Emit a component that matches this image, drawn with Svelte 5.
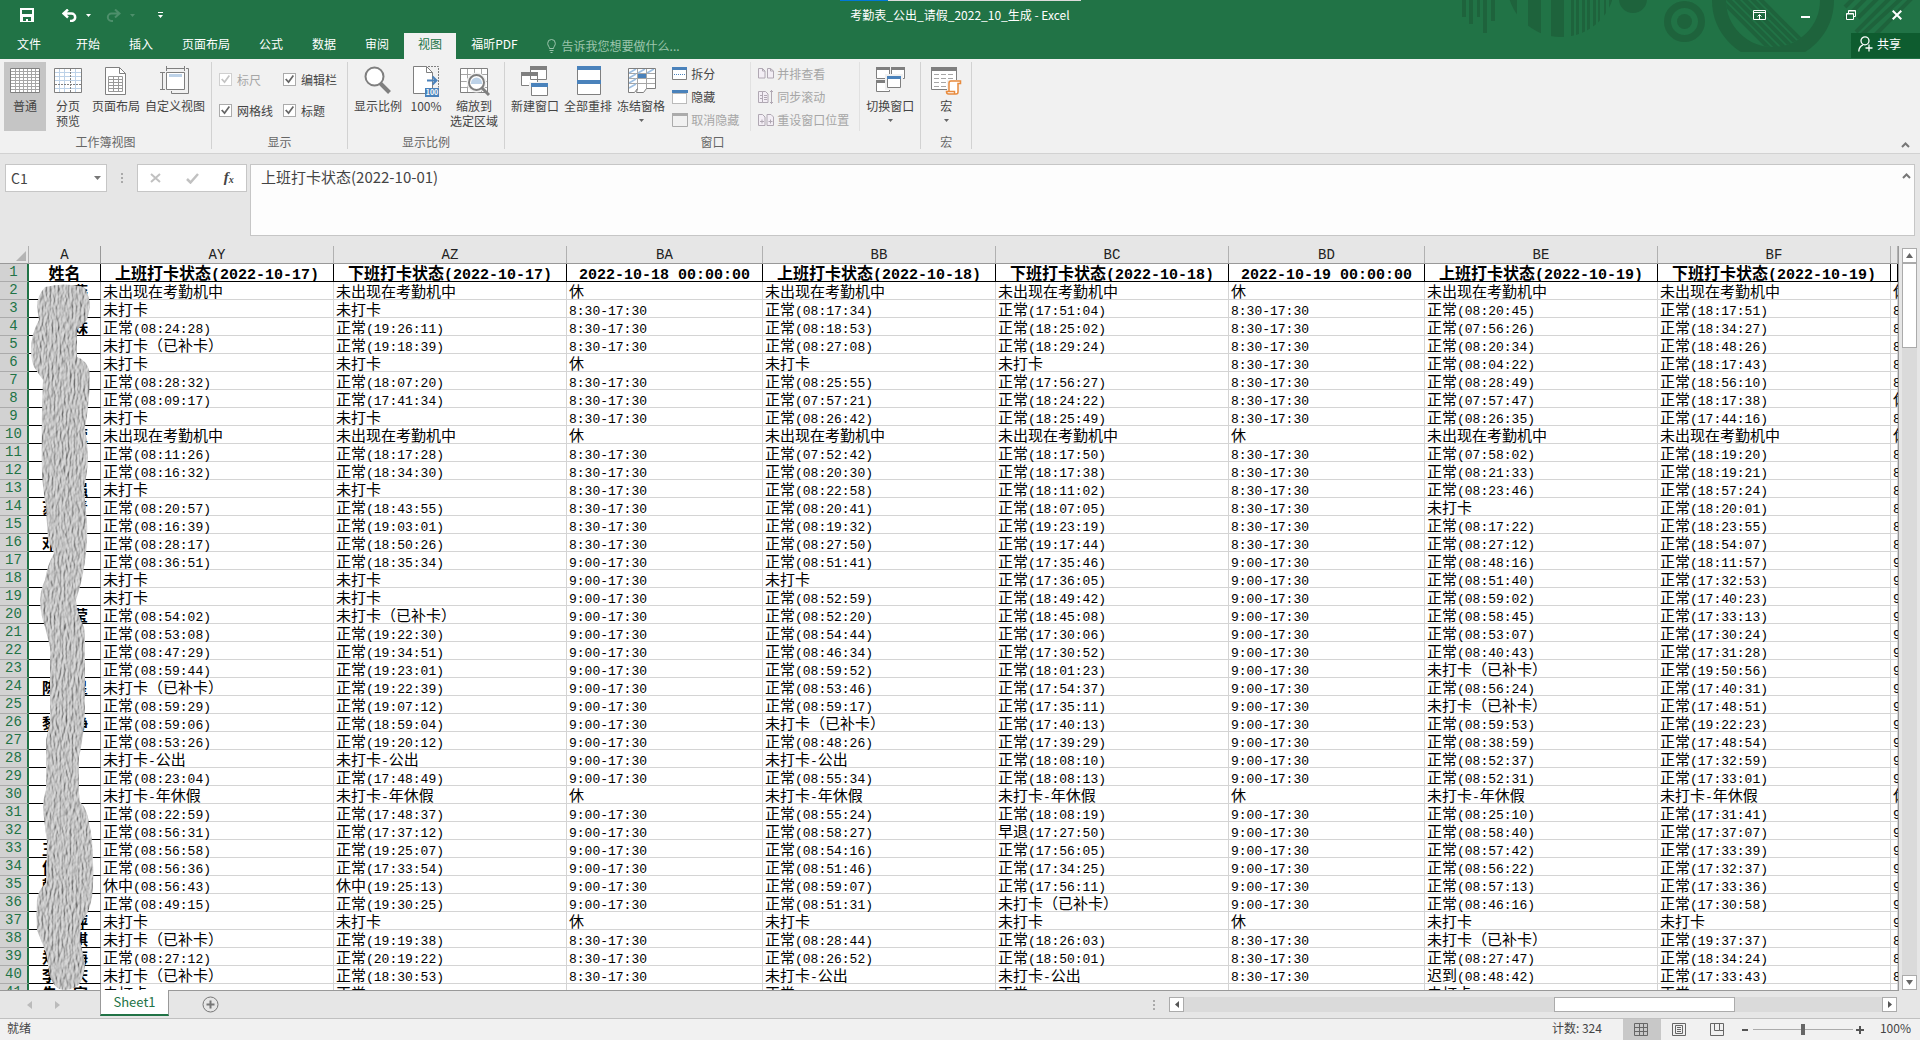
<script lang="ts">
	type Run = { text: string; cjk: boolean };

	const tabs = ['文件', '开始', '插入', '页面布局', '公式', '数据', '审阅', '视图', '福昕PDF'];
	let activeTab = $state('视图');

	let showRuler = $state(true);
	let showFormulaBar = $state(true);
	let showGridlines = $state(true);
	let showHeadings = $state(true);
	let zoom = $state(100);

	const columns = [
		{ id: 'A', width: 72, title: '姓名' },
		{ id: 'AY', width: 233, title: '上班打卡状态(2022-10-17)' },
		{ id: 'AZ', width: 233, title: '下班打卡状态(2022-10-17)' },
		{ id: 'BA', width: 196, title: '2022-10-18 00:00:00' },
		{ id: 'BB', width: 233, title: '上班打卡状态(2022-10-18)' },
		{ id: 'BC', width: 233, title: '下班打卡状态(2022-10-18)' },
		{ id: 'BD', width: 196, title: '2022-10-19 00:00:00' },
		{ id: 'BE', width: 233, title: '上班打卡状态(2022-10-19)' },
		{ id: 'BF', width: 233, title: '下班打卡状态(2022-10-19)' }
	];

	// short codes used in the rows below, a bare time means a normal punch
	const codes: Record<string, string> = {
		N: '未出现在考勤机中',
		W: '未打卡',
		B: '未打卡（已补卡）',
		G: '未打卡-公出',
		Y: '未打卡-年休假',
		X: '休',
		'8': '8:30-17:30',
		'9': '9:00-17:30'
	};

	const source = `
N N X N N X N N X
W W 8 08:17:34 17:51:04 8 08:20:45 18:17:51 8
08:24:28 19:26:11 8 08:18:53 18:25:02 8 07:56:26 18:34:27 8
B 19:18:39 8 08:27:08 18:29:24 8 08:20:34 18:48:26 8
W W X W W 8 08:04:22 18:17:43 8
08:28:32 18:07:20 8 08:25:55 17:56:27 8 08:28:49 18:56:10 8
08:09:17 17:41:34 8 07:57:21 18:24:22 8 07:57:47 18:17:38 X
W W 8 08:26:42 18:25:49 8 08:26:35 17:44:16 8
N N X N N X N N X
08:11:26 18:17:28 8 07:52:42 18:17:50 8 07:58:02 18:19:20 8
08:16:32 18:34:30 8 08:20:30 18:17:38 8 08:21:33 18:19:21 8
W W 8 08:22:58 18:11:02 8 08:23:46 18:57:24 8
08:20:57 18:43:55 8 08:20:41 18:07:05 8 W 18:20:01 8
08:16:39 19:03:01 8 08:19:32 19:23:19 8 08:17:22 18:23:55 8
08:28:17 18:50:26 8 08:27:50 19:17:44 8 08:27:12 18:54:07 8
08:36:51 18:35:34 9 08:51:41 17:35:46 9 08:48:16 18:11:57 9
W W 9 W 17:36:05 9 08:51:40 17:32:53 9
W W 9 08:52:59 18:49:42 9 08:59:02 17:40:23 9
08:54:02 B 9 08:52:20 18:45:08 9 08:58:45 17:33:13 9
08:53:08 19:22:30 9 08:54:44 17:30:06 9 08:53:07 17:30:24 9
08:47:29 19:34:51 9 08:46:34 17:30:52 9 08:40:43 17:31:28 9
08:59:44 19:23:01 9 08:59:52 18:01:23 9 B 19:50:56 9
B 19:22:39 9 08:53:46 17:54:37 9 08:56:24 17:40:31 9
08:59:29 19:07:12 9 08:59:17 17:35:11 9 B 17:48:51 9
08:59:06 18:59:04 9 B 17:40:13 9 08:59:53 19:22:23 9
08:53:26 19:20:12 9 08:48:26 17:39:29 9 08:38:59 17:48:54 9
G G 9 G 18:08:10 9 08:52:37 17:32:59 9
08:23:04 17:48:49 9 08:55:34 18:08:13 9 08:52:31 17:33:01 9
Y Y X Y Y X Y Y X
08:22:59 17:48:37 9 08:55:24 18:08:19 9 08:25:10 17:31:41 9
08:56:31 17:37:12 9 08:58:27 早退(17:27:50) 9 08:58:40 17:37:07 9
08:56:58 19:25:07 9 08:54:16 17:56:05 9 08:57:42 17:33:39 9
08:56:36 17:33:54 9 08:51:46 17:34:25 9 08:56:22 17:32:37 9
休中(08:56:43) 休中(19:25:13) 9 08:59:07 17:56:11 9 08:57:13 17:33:36 9
08:49:15 19:30:25 9 08:51:31 B 9 08:46:16 17:30:58 9
W W X W W X W W 9
B 19:19:38 8 08:28:44 18:26:03 8 B 19:37:37 8
08:27:12 20:19:22 8 08:26:52 18:50:01 8 08:27:47 18:34:24 8
B 18:30:53 8 G G 8 迟到(08:48:42) 17:33:43 8
W 20:40:44 8 08:17:44 18:37:40 8 W 18:40:44 8`;

	const rows = source
		.trim()
		.split('\n')
		.map((line) =>
			line.split(' ').map((c) => codes[c] ?? (/^\d/.test(c) ? `正常(${c})` : c))
		);

	// what still shows of the names on both sides of the smudge
	const names: Record<number, [string, string]> = {
		2: ['', '燕'],
		4: ['', '妹'],
		10: ['', '萱'],
		13: ['', '强'],
		14: ['苏', '青'],
		16: ['邓', ''],
		20: ['', '莹'],
		24: ['陈', '星'],
		26: ['黎', '静'],
		33: ['王', ''],
		34: ['何', ''],
		35: ['韩', ''],
		37: ['', '萍'],
		38: ['', '琪'],
		39: ['郑', '海'],
		40: ['李', '庆'],
		41: ['朱', '宾']
	};

	function runs(text: string): Run[] {
		return (text.match(/[\u2e80-\uffef]+|[^\u2e80-\uffef]+/g) ?? []).map((t) => ({
			text: t,
			cjk: /[\u2e80-\uffef]/.test(t)
		}));
	}
</script>

{#snippet cell(text: string)}
	{#each runs(text) as run}<span class={run.cjk ? 'zh' : 'en'}>{run.text}</span>{/each}
{/snippet}

{#snippet caret()}
	<svg class="caret" width="5" height="3" viewBox="0 0 5 3"><path d="M0 0h5L2.5 3z" fill="currentColor" /></svg>
{/snippet}

<div class="app">
	<header class="top">
		<svg class="art" width="480" height="58" viewBox="0 0 480 58" fill="#1e633c">
			<defs>
				<clipPath id="disc"><circle cx="121" cy="-17" r="54" /></clipPath>
				<clipPath id="bowl"><circle cx="333" cy="0" r="47" /></clipPath>
				<clipPath id="cut"><path d="M260 0h140v52H260z" /></clipPath>
			</defs>
			<path d="M22 0h4v17h-4zM29 0h4v24h-4zM37 0h3v17h-3zM43 0h4v33h-4zM51 0h4v21h-4z" />
			<path
				clip-path="url(#disc)"
				d="M66 0h11v40H66zM88 0h13v40H88zM111 0h13v40h-13zM131 0h3v40h-3zM136 0h3v40h-3zM142 0h3v40h-3zM147 0h3v40h-3zM153 0h3v40h-3zM158 0h2v40h-2zM164 0h2v40h-2zM169 0h3v40h-3z"
			/>
			<circle cx="193" cy="-1" r="14" />
			<circle cx="244.5" cy="21.5" r="17" fill="none" stroke="#1e633c" stroke-width="7" />
			<circle cx="244.5" cy="21.5" r="7.5" />
			<g fill="none" stroke="#1e633c">
				<circle clip-path="url(#cut)" cx="333" cy="0" r="54" stroke-width="14" />
				<path
					clip-path="url(#bowl)"
					stroke-width="4"
					d="M271-10l70 70M279-10l70 70M287-10l70 70M295-10l70 70M303-10l70 70M311-10l70 70"
				/>
				<path stroke-width="4" d="M418-6l-13 13M430-6L405 19M442-6l-24 24M454-6l-38 38M466-6l-54 50M476-6l-48 48" />
			</g>
		</svg>

		<div class="progress"><i></i></div>

		<div class="titlebar">
			<div class="quick">
				<button class="save" aria-label="保存">
					<svg width="14" height="14" viewBox="0 0 14 14"><path d="M0 0h14v14H0zM2 2v4h10V2zM3 9v4h3v-2h2v2h3V9z" fill="#fff" fill-rule="evenodd" /></svg>
				</button>
				<button class="undo" aria-label="撤消">
					<svg width="15" height="13" viewBox="0 0 15 13" fill="none" stroke="#fff" stroke-width="2.500"><path d="M6 .5L1.500 4.500L6 8.500M2 4.500h7.500a3.700 3.700 0 0 1 0 7.400H8" /></svg>
					{@render caret()}
				</button>
				<button class="redo" disabled aria-label="恢复">
					<svg width="15" height="13" viewBox="0 0 15 13" fill="none" stroke="currentColor" stroke-width="2"><path d="M9 .5l4.500 4L9 8.500M13 4.500H5.500a3.700 3.700 0 0 0 0 7.400H7" /></svg>
					{@render caret()}
				</button>
				<button class="more" aria-label="自定义快速访问工具栏">
					<svg width="5" height="6" viewBox="0 0 5 6" fill="#fff"><path d="M0 0h5v1H0zM0 3h5L2.500 6z" /></svg>
				</button>
			</div>
			<div class="title">考勤表_公出_请假_2022_10_生成 - Excel</div>
			<div class="window-buttons">
				<button aria-label="功能区显示选项">
					<svg width="13" height="10" viewBox="0 0 13 10" fill="none" stroke="#fff"><path d="M.5.5h12v9H.5zM.5 2.500h12M6.500 9V5M4.500 6.500l2-2 2 2" /></svg>
				</button>
				<button aria-label="最小化">
					<svg width="9" height="10" viewBox="0 0 9 10"><path d="M0 6h9v2H0z" fill="#fff" /></svg>
				</button>
				<button aria-label="还原">
					<svg width="10" height="10" viewBox="0 0 10 10" fill="none" stroke="#fff"><path d="M.5 3.500h7v6h-7zM.5 4h7M2.500 3V.5h7v6H8M2.500 1h7" /></svg>
				</button>
				<button aria-label="关闭">
					<svg width="10" height="10" viewBox="0 0 10 10" stroke="#fff" stroke-width="2"><path d="M.7.7l8.600 8.600M9.300.7L.7 9.300" /></svg>
				</button>
			</div>
		</div>

		<nav class="tabs">
			{#each tabs as tab}
				<button class="tab" class:active={tab === activeTab} onclick={() => (activeTab = tab)}>{tab}</button>
			{/each}
			<button class="tell">
				<svg width="9" height="14" viewBox="0 0 9 14" fill="none" stroke="currentColor"><path d="M2.500 9.500C2.500 7.500.7 7 .7 4.300a3.800 3.800 0 0 1 7.600 0c0 2.700-1.800 3.200-1.800 5.200zM2.500 11.500h4M3.500 13.500h2" /></svg>
				告诉我您想要做什么...
			</button>
			<button class="share">
				<svg width="15" height="16" viewBox="0 0 15 16" fill="none" stroke="#fff" stroke-width="1.300"><circle cx="7" cy="4.800" r="4" /><path d="M.8 15.500c0-3.500 1.500-5.500 4.200-6.700M11 8.500v7M7.500 12h7" /></svg>
				共享
			</button>
		</nav>
	</header>

	<section class="ribbon">
		<div class="group">
			<div class="tools">
				<button class="tool on">
					<svg width="32" height="32" viewBox="0 0 32 32"><path d="M1.500 3.500h29v24h-29z" fill="#fff" /><path d="M2 6.500h28M2 9.500h28M2 12.500h28M2 15.500h28M2 18.500h28M2 21.500h28M2 24.500h28M6.500 4v23M10.500 4v23M14.500 4v23M18.500 4v23M22.500 4v23M26.500 4v23" stroke="#a6a6a6" /><path d="M1.500 3.500h29v24h-29z" fill="none" stroke="#7f7f7f" /></svg>
					<span>普通</span>
				</button>
				<button class="tool">
					<svg width="32" height="32" viewBox="0 0 32 32"><path d="M2.500 3.500h27v24h-27z" fill="#fff" /><path d="M3 7.500h26M3 11.500h26M3 15.500h26M3 23.500h26M7.500 4v23M12.500 4v23M23.500 4v23" stroke="#bdd2e8" /><path d="M18.500 4v23M3 19.500h26" stroke="#7f7f7f" stroke-dasharray="2 1" /><path d="M2.500 3.500h27v24h-27z" fill="none" stroke="#7f7f7f" /></svg>
					<span>分页<br />预览</span>
				</button>
				<button class="tool">
					<svg width="32" height="32" viewBox="0 0 32 32" fill="none" stroke="#7f7f7f"><path d="M5.500 2.500h14l6 6v21h-20z" fill="#fff" /><path d="M19.500 2.500v6h6" /><path d="M8.500 11.500h14v15h-14zM8.500 14.500h14M8.500 17.500h14M8.500 20.500h14M8.500 23.500h14M13.500 12v14M18.500 12v14" stroke="#999" /></svg>
					<span>页面布局</span>
				</button>
				<button class="tool">
					<svg width="32" height="32" viewBox="0 0 32 32" fill="none" stroke="#7f7f7f"><path d="M7.500 7.500h18v17h-18z" fill="#fff" /><path d="M10 9h13v3H10z" fill="#bdd2e8" stroke="none" /><path d="M7.500 1v5M25.500 1v5M8 3.500h17M1 7.500h5M1 24.500h5M3.500 8v16M27 3.500h2.500v25h-17V26" /></svg>
					<span>自定义视图</span>
				</button>
			</div>
			<div class="caption">工作簿视图</div>
		</div>

		<div class="group">
			<div class="tools checks">
				<label class="off"><input type="checkbox" disabled bind:checked={showRuler} />标尺</label>
				<label><input type="checkbox" bind:checked={showFormulaBar} />编辑栏</label>
				<label><input type="checkbox" bind:checked={showGridlines} />网格线</label>
				<label><input type="checkbox" bind:checked={showHeadings} />标题</label>
			</div>
			<div class="caption">显示</div>
		</div>

		<div class="group">
			<div class="tools">
				<button class="tool">
					<svg width="32" height="32" viewBox="0 0 32 32"><path d="M18 18l9.500 9.500" stroke="#7f7f7f" stroke-width="4" /><circle cx="12.500" cy="11.500" r="9" fill="#fff" stroke="#7f7f7f" stroke-width="2" /></svg>
					<span>显示比例</span>
				</button>
				<button class="tool">
					<svg width="32" height="32" viewBox="0 0 32 32"><path d="M3.500 1.500h13l6 6v21h-19z" fill="#fff" stroke="#7f7f7f" /><path d="M16.500 1.500v6h6" fill="none" stroke="#7f7f7f" /><path d="M18 1.500h10.500v21" fill="none" stroke="#7f7f7f" stroke-dasharray="2 1" /><path d="M17 15.500h9M22.500 11.500l4 4-4 4" fill="none" stroke="#4a82bb" stroke-width="2" /><path d="M15 23h14v9H15z" fill="#4a82bb" /><text x="22" y="30" text-anchor="middle" font-size="7" font-weight="700" fill="#fff">100</text></svg>
					<span>100%</span>
				</button>
				<button class="tool">
					<svg width="32" height="32" viewBox="0 0 32 32"><path d="M2.500 3.500h27v24h-27z" fill="#fff" stroke="#7f7f7f" /><path d="M3 9.500h26M3 16.500h26M3 22.500h26M9.500 4v23M16.500 4v23M23.500 4v23" stroke="#a6a6a6" /><circle cx="18.500" cy="17.500" r="10" fill="#f1f1f1" /><path d="M24 23l7 7" stroke="#7f7f7f" stroke-width="3" /><circle cx="18.500" cy="17.500" r="7.500" fill="#fff" stroke="#7f7f7f" stroke-width="2" /><path d="M13 18a5.500 5.500 0 0 1 11 0v1H13z" fill="#bdd2e8" /></svg>
					<span>缩放到<br />选定区域</span>
				</button>
			</div>
			<div class="caption">显示比例</div>
		</div>

		<div class="group">
			<div class="tools">
				<button class="tool">
					<svg width="32" height="32" viewBox="0 0 32 32"><path d="M11.500 1.500h16v13h-16zM2.500 7.500h16v13h-16z" fill="#fff" stroke="#7f7f7f" /><path d="M11 1h17v4H11zM2 7h17v4H2z" fill="#7f7f7f" /><path d="M10 17h20v15H10z" fill="#f1f1f1" /><path d="M12.500 18.500h16v12h-16z" fill="#fff" stroke="#7f7f7f" /><path d="M12 18h17v4H12z" fill="#4a82bb" /></svg>
					<span>新建窗口</span>
				</button>
				<button class="tool">
					<svg width="32" height="32" viewBox="0 0 32 32"><path d="M5.500 1.500h23v28h-23z" fill="#fff" stroke="#7f7f7f" /><path d="M5 1h24v4H5zM5 15h24v4H5z" fill="#4a82bb" /></svg>
					<span>全部重排</span>
				</button>
				<button class="tool">
					<svg width="32" height="32" viewBox="0 0 32 32"><path d="M3.500 3.500h27v20h-9l-3 4h-15z" fill="#fff" /><path d="M3.500 8.500h27M3.500 13.500h27M3.500 18.500h27M12.500 3.500v20M21.500 3.500v20" stroke="#a6a6a6" /><path d="M4 8l7-4M13 8l7-4M22 8l7-4M4 13l7-4M4 18l7-4M4 23l7-4" stroke="#9dbfe2" stroke-width="1.500" /><path d="M13 9h8v4h-8z" fill="#4a82bb" /><path d="M30.500 23.500v-20h-27v24h6l3-4-1 4h7l3-4h9z" fill="none" stroke="#7f7f7f" /></svg>
					<span>冻结窗格</span>
					{@render caret()}
				</button>
				<div class="stack">
					<button><svg width="16" height="14" viewBox="0 0 16 14"><path d="M.5.5h14v12H.5z" fill="#fff" stroke="#7f7f7f" /><path d="M0 0h15v3H0z" fill="#4a82bb" /><path d="M2 7.500h11" stroke="#4a82bb" stroke-dasharray="1 1" /></svg>拆分</button>
					<button><svg width="16" height="14" viewBox="0 0 16 14"><path d="M.5 3.500h14v10H.5z" fill="#fff" stroke="#7f7f7f" stroke-dasharray="1 1" /><path d="M0 0h16v3H0z" fill="#4a82bb" /></svg>隐藏</button>
					<button disabled><svg width="16" height="14" viewBox="0 0 16 14"><path d="M.5.5h15v13H.5z" fill="#f1f1f1" stroke="#ababab" /><path d="M0 0h16v3H0z" fill="#ababab" /></svg>取消隐藏</button>
				</div>
				<div class="stack second">
					<button disabled><svg width="16" height="14" viewBox="0 0 16 14" fill="#f3eef5" stroke="#b0a8b3"><path d="M.5 1.500h4l2.500 2.500v7H.5zM9.500 1.500h3L15.500 4v7h-6zM4.500 1.500V4H7M12.500 1.500V4h3" /></svg>并排查看</button>
					<button disabled><svg width="16" height="14" viewBox="0 0 16 14" fill="#f3eef5" stroke="#b0a8b3"><path d="M.5 1.500h4v11h-4zM4.500 1.500h3l2.500 2.500v8.500H4.500zM6 5.500h3M6 7.500h3M6 9.500h3M2 5.500h2M2 8.500h2M13.500 0v14M12 1.500h3M12 12.500h3" /></svg>同步滚动</button>
					<button disabled><svg width="16" height="14" viewBox="0 0 16 14" fill="#f3eef5" stroke="#b0a8b3"><path d="M.5 1.500h4L7 4v8.500H.5zM9 1.500h4L15.500 4v8.500H9zM2 8.500h4M4 6.500v4M10.500 8.500h4M12.500 6.500v4" /></svg>重设窗口位置</button>
				</div>
				<button class="tool">
					<svg width="32" height="32" viewBox="0 0 32 32"><path d="M2.500 2.500h13v11h-13zM17.500 2.500h13v11h-13zM2.500 15.500h13v11h-13z" fill="#fff" stroke="#7f7f7f" /><path d="M2 2h14v3H2zM17 2h14v3H17zM2 15h14v3H2z" fill="#7f7f7f" /><path d="M11 9h18v16H11z" fill="#f1f1f1" /><path d="M13.500 11.500h13v11h-13z" fill="#fff" stroke="#7f7f7f" /><path d="M13 11h14v3H13z" fill="#4a82bb" /></svg>
					<span>切换窗口</span>
					{@render caret()}
				</button>
			</div>
			<div class="caption">窗口</div>
		</div>

		<div class="group">
			<div class="tools">
				<button class="tool">
					<svg width="32" height="32" viewBox="0 0 32 32"><path d="M1.500 2.500h25v22h-25z" fill="#fff" stroke="#7f7f7f" /><path d="M1 2h26v4H1z" fill="#7f7f7f" /><path d="M4 9.500h20M4 13.500h20M4 17.500h20M4 21.500h14" stroke="#a6a6a6" stroke-dasharray="5 2" /><path d="M17 15h15v15H17z" fill="#f1f1f1" /><path d="M19 26v-8q0-2 2-2h9.500v2.500H28V27q0 2-2 2h-7.500q-2 0-2-2.500h8V29" fill="#fff" stroke="#e88b3e" stroke-width="1.500" /></svg>
					<span>宏</span>
					{@render caret()}
				</button>
			</div>
			<div class="caption">宏</div>
		</div>
		<button class="fold" aria-label="折叠功能区"><svg width="9" height="6" viewBox="0 0 9 6"><path d="M1 5l3.500-3.500L8 5" fill="none" stroke="#777" stroke-width="2" /></svg></button>
	</section>

	<section class="formula">
		<div class="name-box">
			<input aria-label="名称框" value="C1" />
			<svg width="7" height="4" viewBox="0 0 7 4"><path d="M0 0h7L3.500 4z" fill="#777" /></svg>
		</div>
		<svg class="grip" width="2" height="10" viewBox="0 0 2 10"><path d="M0 0h2v2H0zM0 4h2v2H0zM0 8h2v2H0z" fill="#aaa" /></svg>
		<div class="entry">
			<button aria-label="取消"><svg width="11" height="10" viewBox="0 0 11 10" stroke="#c1c1c1" stroke-width="2"><path d="M1 1l9 8M10 1L1 9" /></svg></button>
			<button aria-label="输入"><svg width="13" height="11" viewBox="0 0 13 11" fill="none" stroke="#c1c1c1" stroke-width="2.500"><path d="M1 6l3.500 3.500L12 1" /></svg></button>
			<button class="fx" aria-label="插入函数">f<sub>x</sub></button>
		</div>
		<div class="editor">
			<textarea aria-label="编辑栏" spellcheck="false">上班打卡状态(2022-10-01)</textarea>
			<button aria-label="折叠编辑栏"><svg width="9" height="6" viewBox="0 0 9 6"><path d="M1 5l3.500-3.500L8 5" fill="none" stroke="#777" stroke-width="2" /></svg></button>
		</div>
	</section>

	<main class="sheet">
		<div class="grid">
			<table>
				<colgroup>
					<col style="width: 29px" />
					{#each columns as column}
						<col style="width: {column.width}px" />
					{/each}
					<col />
				</colgroup>
				<thead>
					<tr>
						<th class="corner"><svg width="10" height="10" viewBox="0 0 10 10"><path d="M10 0v10H0z" fill="#b4b4b4" /></svg></th>
						{#each columns as column}
							<th class:frozen={column.id === 'A'}>{column.id}</th>
						{/each}
						<th></th>
					</tr>
				</thead>
				<tbody>
					<tr class="titles">
						<th>1</th>
						{#each columns as column}
							<td class:frozen={column.id === 'A'}>{@render cell(column.title)}</td>
						{/each}
						<td></td>
					</tr>
					{#each rows as row, i}
						<tr>
							<th>{i + 2}</th>
							<td class="name frozen">
								{#if names[i + 2]}
									<div><span>{names[i + 2][0]}</span><span>{names[i + 2][1]}</span></div>
								{/if}
							</td>
							{#each row as value}
								<td>{@render cell(value)}</td>
							{/each}
						</tr>
					{/each}
				</tbody>
			</table>

			<svg class="smudge" width="72" height="726" viewBox="0 0 72 726">
				<filter id="brush" x="0" y="0" width="100%" height="100%" color-interpolation-filters="sRGB">
					<feTurbulence type="fractalNoise" baseFrequency="0.5 0.14" numOctaves="3" seed="4" result="noise" />
					<feDiffuseLighting in="noise" lighting-color="#dcdcdc" surfaceScale="1.3" result="relief"><feDistantLight azimuth="20" elevation="62" /></feDiffuseLighting>
					<feComposite in="relief" in2="SourceGraphic" operator="in" />
				</filter>
				<path
					filter="url(#brush)"
					d="M16 21Q8 30 8 41L10 54Q2 68 2 84Q2 94 5 101L14 114Q12 160 13 207Q14 226 17 241L19 274L25 287Q18 300 16 314Q11 324 11 337Q12 350 16 361L21 381V457L17 474V524Q14 532 14 544L18 577L17 617Q9 624 8 634Q7 650 8 664L17 687L21 711Q26 724 35 724Q46 724 51 717Q56 708 56 697L51 674L52 657Q61 646 63 631Q65 612 64 597Q64 572 60 557Q58 542 51 536L50 527V491Q55 470 56 444V371L55 361Q48 348 47 334Q53 316 55 301Q59 280 58 257L55 221Q59 206 59 187L56 161Q61 135 61 107Q58 94 48 91V64L58 54L61 41Q61 30 55 21Q36 16 16 21Z"
				/>
			</svg>
		</div>

		<div class="vscroll">
			<button aria-label="向上滚动"><svg width="7" height="5" viewBox="0 0 7 5"><path d="M0 5h7L3.500 0z" fill="#666" /></svg></button>
			<div class="track"><div class="thumb"></div></div>
			<button aria-label="向下滚动"><svg width="7" height="5" viewBox="0 0 7 5"><path d="M0 0h7L3.500 5z" fill="#666" /></svg></button>
		</div>
	</main>

	<section class="sheets">
		<div class="arrows">
			<button disabled aria-label="上一个工作表"><svg width="5" height="8" viewBox="0 0 5 8"><path d="M5 0v8L0 4z" fill="#bbb" /></svg></button>
			<button disabled aria-label="下一个工作表"><svg width="5" height="8" viewBox="0 0 5 8"><path d="M0 0v8l5-4z" fill="#bbb" /></svg></button>
		</div>
		<button class="sheet-tab">Sheet1</button>
		<button class="add" aria-label="新工作表"><svg width="17" height="17" viewBox="0 0 17 17" fill="none" stroke="#777"><circle cx="8.500" cy="8.500" r="7.500" /><path d="M8.500 4.500v8M4.500 8.500h8" stroke-width="2" /></svg></button>
		<div class="hscroll">
			<svg class="grip" width="2" height="10" viewBox="0 0 2 10"><path d="M0 0h2v2H0zM0 4h2v2H0zM0 8h2v2H0z" fill="#aaa" /></svg>
			<button aria-label="向左滚动"><svg width="4" height="7" viewBox="0 0 4 7"><path d="M4 0v7L0 3.500z" fill="#555" /></svg></button>
			<div class="track"><div class="thumb"></div></div>
			<button aria-label="向右滚动"><svg width="4" height="7" viewBox="0 0 4 7"><path d="M0 0v7l4-3.500z" fill="#555" /></svg></button>
		</div>
	</section>

	<footer class="status">
		<span>就绪</span>
		<span class="count">计数: 324</span>
		<div class="views">
			<button class="on" aria-label="普通"><svg width="15" height="13" viewBox="0 0 15 13" fill="none" stroke="#666"><path d="M.5.5h13v12H.5zM.5 4.500h13M.5 8.500h13M5.500.5v12M9.500.5v12" /></svg></button>
			<button aria-label="页面布局"><svg width="15" height="13" viewBox="0 0 15 13" fill="none" stroke="#666"><path d="M.5.5h13v12H.5zM3.500 2.500h7v8h-7zM5 4.500h4M5 6.500h4M5 8.500h4" /></svg></button>
			<button aria-label="分页预览"><svg width="15" height="13" viewBox="0 0 15 13" fill="none" stroke="#666"><path d="M.5.5h13v12H.5zM4.500.5v7h5v-7M9.500 7.500h4" /></svg></button>
		</div>
		<button class="step" aria-label="缩小"><svg width="9" height="9" viewBox="0 0 9 9"><path d="M1 4h6v2H1z" fill="#555" /></svg></button>
		<input type="range" min="10" max="190" aria-label="缩放" bind:value={zoom} />
		<button class="step" aria-label="放大"><svg width="9" height="9" viewBox="0 0 9 9"><path d="M0 4h8v2H0zM3 1h2v8H3z" fill="#555" /></svg></button>
		<span class="percent">{zoom}%</span>
	</footer>
</div>

<style>
	:global(body) {
		margin: 0;
	}

	.app {
		display: flex;
		flex-direction: column;
		height: 100vh;
		overflow: hidden;
		background: #e6e6e6;
		color: #444;
		font: 12px/16px 'Noto Sans CJK SC', sans-serif;
	}

	button,
	input,
	textarea {
		margin: 0;
		padding: 0;
		border: 0;
		border-radius: 0;
		background: none;
		color: inherit;
		font: inherit;
	}

	svg {
		display: block;
		flex: none;
	}

	/* title bar and tabs */
	.top {
		position: relative;
		flex: none;
		background: #217346;
		color: #fff;
	}

	.art {
		position: absolute;
		top: 0;
		right: 0;
	}

	.progress {
		position: absolute;
		top: 0;
		left: 840px;
		width: 241px;
		height: 1px;
		background: #dcdcdc;
	}

	.progress i {
		display: block;
		width: 48px;
		height: 1px;
		background: #0078d7;
	}

	.titlebar {
		position: relative;
		display: grid;
		grid-template-columns: 1fr auto 1fr;
		height: 33px;
	}

	.quick {
		display: flex;
		align-items: center;
		gap: 15px;
		padding: 0 0 3px 20px;
	}

	.quick button {
		display: flex;
		align-items: center;
		gap: 9px;
	}

	.quick .undo {
		margin-left: 13px;
	}

	.quick .redo {
		color: #4d8f6b;
	}

	.quick .more {
		margin-left: 8px;
	}

	.title {
		padding-top: 7px;
	}

	.window-buttons {
		display: flex;
		justify-content: flex-end;
	}

	.window-buttons button {
		display: flex;
		justify-content: center;
		width: 46px;
		padding-top: 10px;
	}

	.tabs {
		position: relative;
		display: flex;
		gap: 1px;
		height: 26px;
		padding-left: 3px;
	}

	.tab {
		padding: 0 14px 4px;
	}

	.tab:first-child {
		margin-right: 6px;
	}

	.tab.active {
		background: #f1f1f1;
		color: #217346;
	}

	.tell {
		display: flex;
		align-items: center;
		gap: 6px;
		padding-left: 14px;
		color: #9cc5ad;
	}

	.share {
		display: flex;
		align-items: center;
		gap: 4px;
		height: 25px;
		box-sizing: border-box;
		margin-left: auto;
		padding: 0 19px 3px 7px;
		background: #0e5c2f;
	}

	/* ribbon */
	.ribbon {
		display: flex;
		flex: none;
		height: 94px;
		border-bottom: 1px solid #d2d2d2;
		background: #f1f1f1;
	}

	.group {
		display: flex;
		flex-direction: column;
		justify-content: space-between;
		height: 87px;
		margin-top: 3px;
		padding: 0 4px;
		border-right: 1px solid #d2d2d2;
	}

	.tools {
		display: flex;
		gap: 1px;
		height: 69px;
	}

	.tool {
		display: flex;
		flex-direction: column;
		align-items: center;
		min-width: 42px;
		padding: 3px 2px 0;
		line-height: 15px;
	}

	.tool span {
		margin-top: 1px;
	}

	.tool .caret {
		margin-top: 6px;
		color: #666;
	}

	.tool.on {
		background: #c5c5c5;
	}

	.caption {
		color: #666;
		line-height: 14px;
		text-align: center;
	}

	.checks {
		display: grid;
		grid-template-columns: 64px auto;
		grid-template-rows: 31px 31px;
		padding: 2px 6px 0 3px;
		gap: 0;
	}

	.checks label {
		display: flex;
		align-items: center;
		gap: 5px;
	}

	.checks .off {
		color: #a6a6a6;
	}

	.checks input {
		display: grid;
		place-items: center;
		width: 13px;
		height: 13px;
		border: 1px solid #ababab;
		background: #fff;
		appearance: none;
	}

	.checks input:checked::after {
		width: 9px;
		height: 9px;
		background: #666;
		clip-path: polygon(0 50%, 15% 38%, 38% 65%, 85% 0, 100% 10%, 40% 95%);
		content: '';
	}

	.checks input:disabled {
		border-color: #d0d0d0;
	}

	.checks input:disabled::after {
		background: #c4c4c4;
	}

	.stack {
		display: grid;
		grid-template-rows: repeat(3, 23px);
		padding: 0 10px 0 4px;
	}

	.stack.second {
		padding: 0 10px 0 7px;
		margin-right: 3px;
		border: solid #e1e1e1;
		border-width: 0 1px;
	}

	.stack button {
		display: flex;
		align-items: center;
		gap: 3px;
	}

	.stack button:disabled {
		color: #a6a6a6;
	}

	.fold {
		align-self: flex-end;
		margin: 0 10px 5px auto;
	}

	/* formula bar */
	.formula {
		display: flex;
		flex: none;
		align-items: flex-start;
		height: 72px;
		padding: 10px 5px 10px;
	}

	.name-box {
		display: flex;
		align-items: center;
		width: 102px;
		height: 28px;
		box-sizing: border-box;
		padding: 0 5px;
		border: 1px solid #c6c6c6;
		background: #fff;
	}

	.name-box input {
		flex: 1;
		min-width: 0;
		font-size: 14px;
	}

	.grip {
		margin: 9px 14px;
	}

	.entry {
		display: flex;
		align-items: center;
		justify-content: space-around;
		width: 110px;
		height: 28px;
		box-sizing: border-box;
		border: 1px solid #c6c6c6;
		background: #fff;
	}

	.entry .fx {
		font: italic bold 15px/16px 'Liberation Serif', serif;
	}

	.fx sub {
		font-size: 10px;
		vertical-align: -1px;
	}

	.editor {
		display: flex;
		flex: 1;
		align-self: stretch;
		align-items: flex-start;
		margin-left: 3px;
		border: 1px solid #c6c6c6;
		background: #fdfdfd;
	}

	.editor textarea {
		flex: 1;
		align-self: stretch;
		padding: 2px 10px;
		font-size: 15px;
		line-height: 20px;
		resize: none;
	}

	.editor button {
		padding: 8px 3px;
	}

	/* worksheet */
	.sheet {
		display: flex;
		flex: 1;
		min-height: 0;
	}

	.grid {
		position: relative;
		flex: 1;
		overflow: hidden;
		border: solid #999;
		border-width: 0 1px 1px 0;
	}

	table {
		width: 100%;
		border-collapse: separate;
		border-spacing: 0;
		background: #fff;
		table-layout: fixed;
	}

	th,
	td {
		height: 17px;
		padding: 0;
		line-height: 17px;
		white-space: nowrap;
	}

	th {
		background: #e6e6e6;
		font: 14px/17px 'Liberation Mono', monospace;
	}

	thead th {
		height: 15px;
		padding-top: 2px;
		border-right: 1px solid #b1b1b1;
		border-bottom: 1px solid #999;
		color: #222;
		line-height: 15px;
	}

	.corner svg {
		margin: 0 2px 0 auto;
	}

	tbody th {
		border-right: 2px solid #217346;
		border-bottom: 1px solid #ababab;
		background: #d2d2d2;
		color: #217346;
	}

	td {
		padding-left: 2px;
		border-right: 1px solid #d4d4d4;
		border-bottom: 1px solid #d4d4d4;
		color: #000;
		font-size: 15px;
	}

	td.frozen,
	thead th.frozen {
		border-right-color: #999;
	}

	/* latin runs must not stretch the line box of the row */
	.en {
		font-family: 'Liberation Mono', monospace;
		font-size: 13px;
		line-height: 0;
	}

	.titles td {
		padding: 0;
		border-color: #000;
		font-size: 16px;
		font-weight: 700;
		text-align: center;
	}

	.titles .en {
		font-size: 15px;
	}

	td.name {
		padding: 0;
		border-bottom-color: #000;
		font-weight: 700;
	}

	.name div {
		display: flex;
		justify-content: space-between;
		height: 17px;
		padding: 0 12px 0 13px;
	}

	.smudge {
		position: absolute;
		top: 20px;
		left: 29px;
	}

	.vscroll {
		display: flex;
		flex-direction: column;
		width: 15px;
		padding: 2px 3px 1px;
	}

	.vscroll button,
	.hscroll button {
		display: flex;
		flex: none;
		align-items: center;
		justify-content: center;
		width: 15px;
		height: 15px;
		box-sizing: border-box;
		border: 1px solid #ababab;
		background: #fff;
	}

	.track {
		flex: 1;
		background: #dadada;
	}

	.thumb {
		box-sizing: border-box;
		border: 1px solid #ababab;
		background: #fff;
	}

	.vscroll .thumb {
		height: 12%;
	}

	/* sheet tabs */
	.sheets {
		display: flex;
		flex: none;
		height: 27px;
		border-bottom: 1px solid #c0c0c0;
	}

	.arrows {
		display: flex;
		align-items: center;
		gap: 23px;
		width: 73px;
		padding-left: 27px;
	}

	.sheet-tab {
		z-index: 1;
		width: 69px;
		height: 26px;
		box-sizing: border-box;
		margin-top: -1px;
		border: solid #999;
		border-width: 0 1px;
		border-bottom: 2px solid #217346;
		background: #fff;
		color: #217346;
		font-size: 13px;
	}

	.add {
		align-self: center;
		margin-left: 33px;
	}

	.hscroll {
		display: flex;
		align-items: center;
		width: 40%;
		margin-left: auto;
		padding-right: 23px;
	}

	.hscroll .grip {
		margin-left: 24px;
	}

	.hscroll .track {
		display: flex;
		height: 15px;
	}

	.hscroll .thumb {
		width: 26%;
		margin-left: 53%;
	}

	/* status bar */
	.status {
		display: flex;
		flex: none;
		align-items: center;
		height: 21px;
		padding: 0 9px 0 7px;
		background: #f1f1f1;
	}

	.status span {
		padding-bottom: 3px;
	}

	.status .count {
		margin: 0 21px 0 auto;
	}

	.views {
		display: flex;
		align-self: stretch;
		margin-right: 3px;
	}

	.views button {
		display: flex;
		align-items: center;
		justify-content: center;
		width: 38px;
	}

	.views .on {
		background: #c8c8c8;
	}

	.step {
		padding: 0 1px;
	}

	.status input {
		width: 100px;
		height: 12px;
		margin: 0 2px;
		appearance: none;
		background: linear-gradient(#ababab, #ababab) center / 100% 1px no-repeat;
	}

	.status input::-webkit-slider-thumb {
		width: 4px;
		height: 11px;
		appearance: none;
		background: #666;
	}

	.percent {
		margin-left: 14px;
	}
</style>
